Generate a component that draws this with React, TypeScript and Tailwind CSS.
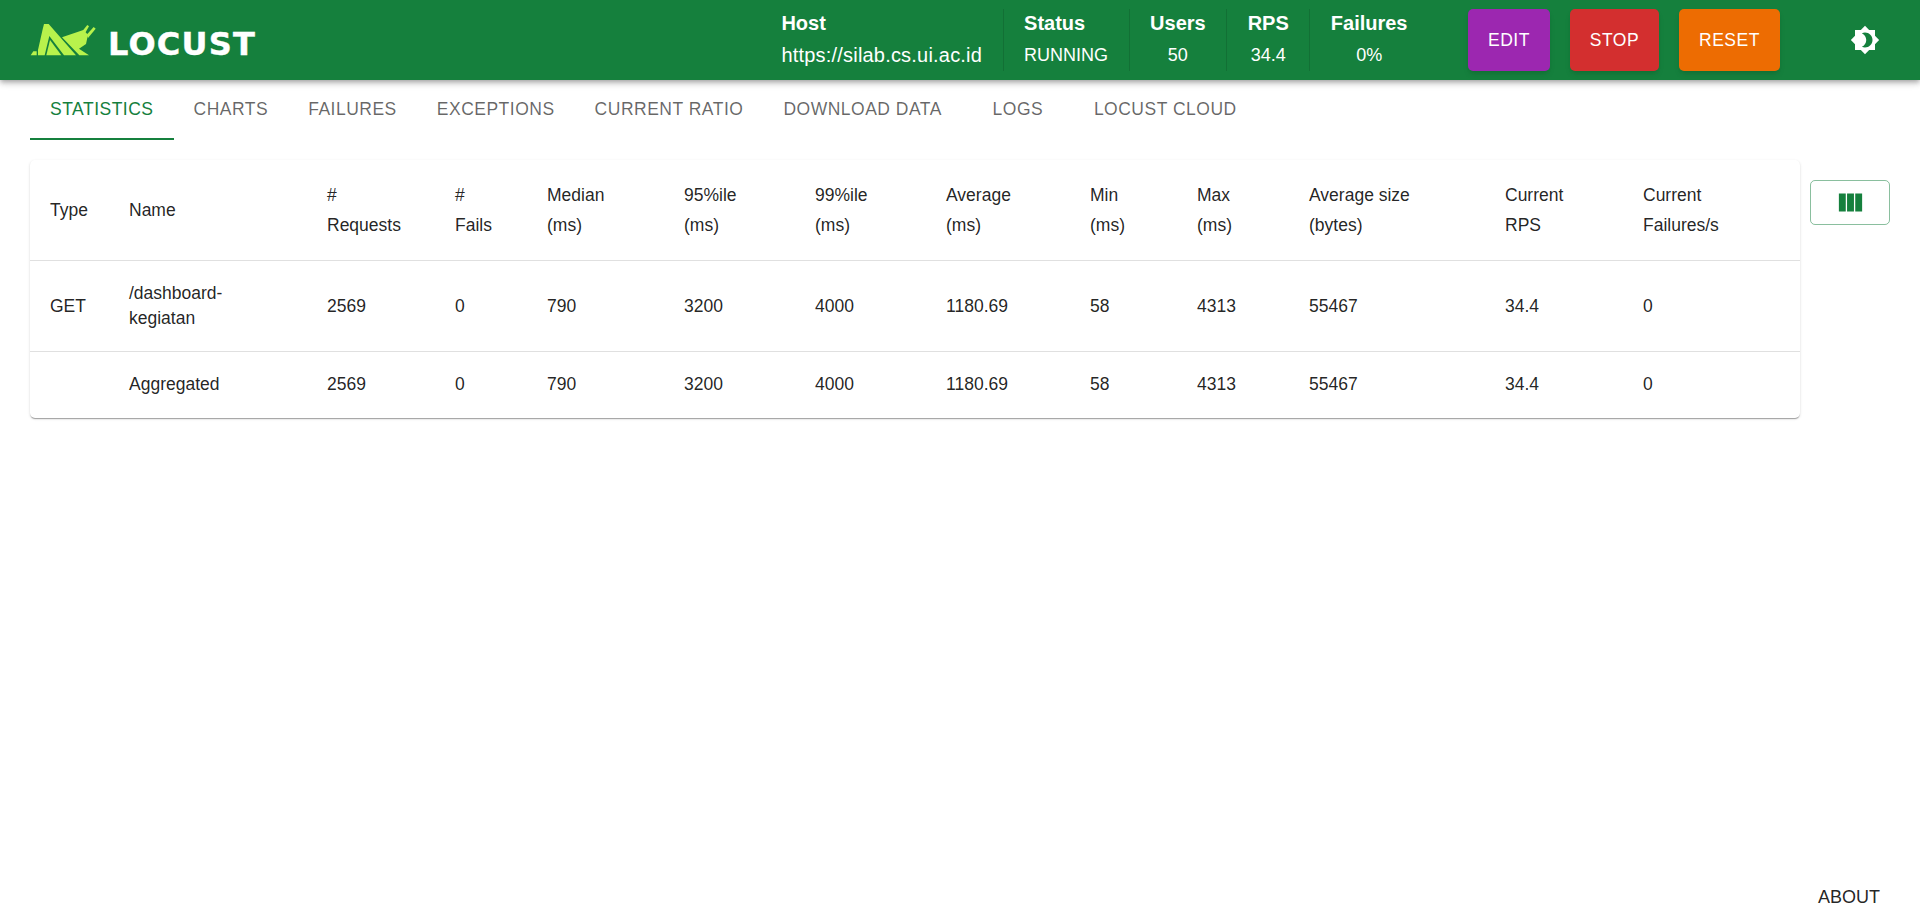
const STATS = [
  { label: 'Host', value: 'https://silab.cs.ui.ac.id', align: 'items-start', valueClass: 'text-[20px] tracking-[0.2px]' },
  { label: 'Status', value: 'RUNNING', align: 'items-start', valueClass: 'text-[18px]' },
  { label: 'Users', value: '50', align: 'items-center', valueClass: 'text-[18px]' },
  { label: 'RPS', value: '34.4', align: 'items-center', valueClass: 'text-[18px]' },
  { label: 'Failures', value: '0%', align: 'items-center', valueClass: 'text-[18px]' },
]

const TABS = [
  { label: 'STATISTICS', className: 'px-5' },
  { label: 'CHARTS', className: 'px-5' },
  { label: 'FAILURES', className: 'px-5' },
  { label: 'EXCEPTIONS', className: 'px-5' },
  { label: 'CURRENT RATIO', className: 'px-5' },
  { label: 'DOWNLOAD DATA', className: 'px-5' },
  { label: 'LOGS', className: 'w-[112px] justify-center' },
  { label: 'LOCUST CLOUD', className: 'px-5' },
]

const COLUMNS = [
  { title: 'Type', className: 'w-[79px]' },
  { title: 'Name', className: 'w-[198px]' },
  { title: '#\nRequests', className: 'w-[128px]' },
  { title: '#\nFails', className: 'w-[92px]' },
  { title: 'Median\n(ms)', className: 'w-[137px]' },
  { title: '95%ile\n(ms)', className: 'w-[131px]' },
  { title: '99%ile\n(ms)', className: 'w-[131px]' },
  { title: 'Average\n(ms)', className: 'w-[144px]' },
  { title: 'Min\n(ms)', className: 'w-[107px]' },
  { title: 'Max\n(ms)', className: 'w-[112px]' },
  { title: 'Average size\n(bytes)', className: 'w-[196px]' },
  { title: 'Current\nRPS', className: 'w-[138px]' },
  { title: 'Current\nFailures/s', className: 'w-[177px]' },
]

const NUMBERS = ['2569', '0', '790', '3200', '4000', '1180.69', '58', '4313', '55467', '34.4', '0']

const ROWS = [
  ['GET', '/dashboard-kegiatan', ...NUMBERS],
  ['', 'Aggregated', ...NUMBERS],
]

function Logo() {
  return (
    <div className="flex items-center">
      <svg viewBox="0 0 240 144" className="h-12 w-20 shrink-0" fill="#b8f24c">
        <path d="M60 24 74 24 156 118 120 118 76 60 62 118 42 118 42 102 56 40Z" />
        <path d="M20 118 28 106 38 106 38 118Z" />
        <path d="M67 118 78 72 112 118Z" />
        <path d="M114 64 178 42 192 56 186 84 165 98 195 118 166 118Z" />
        <path d="M176 44 190 27 195 31 184 50Z" />
        <path d="M188 56 209 33 215 38 192 66Z" />
      </svg>
      <span className="mt-[8px] ml-[4px] font-['DejaVu_Sans',sans-serif] text-[32px] leading-none font-bold tracking-[1.2px] text-white [-webkit-text-stroke:0.4px_white]">
        LOCUST
      </span>
    </div>
  )
}

export default function App() {
  return (
    <div className="flex min-h-screen flex-col bg-white font-['Liberation_Sans',Arial,sans-serif] text-black/87">
      <header className="relative z-10 flex h-20 items-center bg-[#15803d] pl-6 shadow-[0_2px_4px_-1px_rgba(0,0,0,0.2),0_4px_5px_0_rgba(0,0,0,0.14),0_1px_10px_0_rgba(0,0,0,0.12)]">
        <Logo />

        <div className="ml-auto flex h-[62px] items-stretch text-white">
          {STATS.map((s, i) => (
            <div
              key={s.label}
              className={[
                'flex flex-col justify-between px-[20.5px] pt-0 pb-[2px]',
                s.align,
                i > 0 ? 'border-l border-black/12' : '',
              ].join(' ')}
            >
              <span className="text-[20px] leading-[28px] font-bold">{s.label}</span>
              <span className={s.valueClass + ' leading-[28px]'}>{s.value}</span>
            </div>
          ))}
        </div>

        <div className="ml-[40px] flex h-[62px] gap-5 text-[17.5px] tracking-[0.5px] text-white">
          <button className="w-[82px] rounded-[5px] bg-[#9c27b0] shadow-md">EDIT</button>
          <button className="w-[89px] rounded-[5px] bg-[#d32f2f] shadow-md">STOP</button>
          <button className="w-[101px] rounded-[5px] bg-[#ed6c02] shadow-md">RESET</button>
        </div>

        <svg viewBox="0 0 24 24" className="mr-10 ml-[70px] h-[30px] w-[30px] shrink-0" fill="#fff">
          <path d="M20 8.69V4h-4.69L12 .69 8.69 4H4v4.69L.69 12 4 15.31V20h4.69L12 23.31 15.31 20H20v-4.69L23.31 12 20 8.69zM12 18c-.89 0-1.74-.2-2.5-.55C11.56 16.5 13 14.42 13 12s-1.44-4.5-3.5-5.45C10.26 6.2 11.11 6 12 6c3.31 0 6 2.69 6 6s-2.69 6-6 6z" />
        </svg>
      </header>

      <nav className="mx-[30px] flex h-[60px] text-[17.5px] tracking-[0.5px] text-black/60">
        {TABS.map((tab, i) => (
          <div
            key={tab.label}
            className={[
              'flex items-center border-b-2',
              tab.className,
              i === 0 ? 'border-[#15803d] text-[#15803d]' : 'border-transparent',
            ].join(' ')}
          >
            {tab.label}
          </div>
        ))}
      </nav>

      <main className="mt-5 flex items-start pl-[30px]">
        <div className="w-[1770px] rounded-[5px] bg-white shadow-[0_2px_1px_-1px_rgba(0,0,0,0.2),0_1px_1px_0_rgba(0,0,0,0.14),0_1px_3px_0_rgba(0,0,0,0.12)]">
          <table className="w-full table-fixed border-collapse text-[17.5px]">
            <colgroup>
              {COLUMNS.map((c) => (
                <col key={c.title} className={c.className} />
              ))}
            </colgroup>
            <thead>
              <tr className="border-b border-[#e0e0e0]">
                {COLUMNS.map((c) => (
                  <th key={c.title} className="px-5 py-5 text-left leading-[30px] font-normal whitespace-pre-line">
                    {c.title}
                  </th>
                ))}
              </tr>
            </thead>
            <tbody>
              {ROWS.map((row, r) => (
                <tr key={r} className={r === 0 ? 'border-b border-[#e0e0e0]' : ''}>
                  {row.map((cell, i) => (
                    <td key={i} className={r === 0 ? 'px-5 py-5 leading-[25px]' : 'px-5 pt-5 pb-[21px] leading-[25px]'}>
                      {cell}
                    </td>
                  ))}
                </tr>
              ))}
            </tbody>
          </table>
        </div>

        <button className="mt-5 ml-[10px] flex h-[45px] w-20 items-center justify-center rounded-[5px] border border-[#15803d]/50">
          <svg viewBox="0 0 24 24" className="h-[31px] w-[31px]" fill="#15803d">
            <path d="M14.67 5v14H9.33V5zm1 14H21V5h-5.33zm-7.34 0V5H3v14z" />
          </svg>
        </button>
      </main>

      <footer className="mt-auto flex justify-end pr-10 pb-[15px] text-[18px] leading-5">ABOUT</footer>
    </div>
  )
}
